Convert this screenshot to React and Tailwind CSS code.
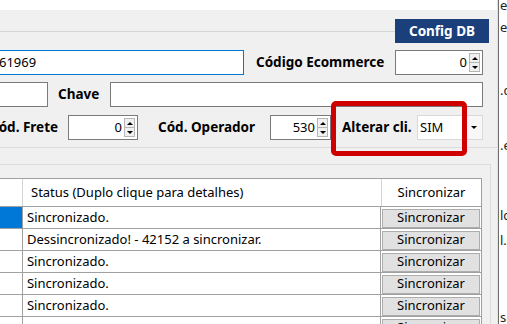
import React from 'react';

const ROWS = [
  { status: 'Sincronizado.', selected: true },
  { status: 'Dessincronizado! - 42152 a sincronizar.' },
  { status: 'Sincronizado.' },
  { status: 'Sincronizado.' },
  { status: 'Sincronizado.' },
  { status: '' },
];

const FRAGMENTS = [
  { top: -4, text: 'el' },
  { top: 18, text: 'e:' },
  { top: 81, text: '.c' },
  { top: 136, text: '.e' },
  { top: 206, text: 'lc' },
  { top: 231, text: 'l.c' },
  { top: 308, text: 's.' },
];

function Spinner({ value, width }) {
  return (
    <div className={`${width} h-[25px] bg-white border border-[#7a7a7a] flex items-stretch`}>
      <div className="flex-1 flex items-center justify-end pr-[2px] text-[13px]">{value}</div>
      <div className="w-[11px] flex flex-col my-[2px] mr-[2px]">
        <div className="flex-1 bg-[#f0f0f0] border border-[#b5b5b5] flex items-center justify-center">
          <div className="w-0 h-0 border-l-[3px] border-r-[3px] border-b-[3px] border-l-transparent border-r-transparent border-b-black" />
        </div>
        <div className="flex-1 bg-[#f0f0f0] border border-[#b5b5b5] border-t-0 flex items-center justify-center">
          <div className="w-0 h-0 border-l-[3px] border-r-[3px] border-t-[3px] border-l-transparent border-r-transparent border-t-black" />
        </div>
      </div>
    </div>
  );
}

export default function App() {
  return (
    <div
      className="w-[507px] h-[324px] overflow-hidden flex bg-white text-black"
      style={{ fontFamily: '"Noto Sans", "Open Sans", sans-serif' }}
    >
      {/* Main form */}
      <div className="w-[498px] shrink-0 bg-[#f0f0f0] flex flex-col overflow-hidden relative border-r border-[#e3e3e3]">
        <div className="h-[10px] bg-white shrink-0" />

        {/* Toolbar line + Config DB */}
        <div className="flex items-center h-[24px] mt-[9px] pr-[8px] shrink-0">
          <div className="flex-1 h-px bg-[#d5d5d5]" />
          <div className="w-[94px] h-[24px] bg-[#1a3f7a] text-white font-bold text-[13.5px] flex items-center justify-center">
            Config DB
          </div>
        </div>

        {/* Row 1 */}
        <div className="flex items-center h-[25px] mt-[7px] pr-[14px] shrink-0">
          <div className="-ml-[30px] w-[274px] h-[25px] bg-white border border-[#0078d7] flex items-center pl-[28px] text-[13px]">
            61969
          </div>
          <div className="ml-[12px] font-bold text-[13.5px] whitespace-nowrap">Código Ecommerce</div>
          <div className="ml-auto">
            <Spinner value="0" width="w-[88px]" />
          </div>
        </div>

        {/* Row 2 */}
        <div className="flex items-center h-[25px] mt-[7px] pr-[14px] shrink-0">
          <div className="-ml-[30px] w-[78px] h-[25px] bg-white border border-[#7a7a7a]" />
          <div className="ml-[10px] w-[52px] font-bold text-[13.5px]">Chave</div>
          <div className="flex-1 h-[25px] bg-white border border-[#7a7a7a]" />
        </div>

        {/* Row 3 */}
        <div className="flex items-center h-[25px] mt-[8px] pr-[14px] shrink-0">
          <div className="-ml-[10px] w-[78px] font-bold text-[13.5px] whitespace-nowrap">Cód. Frete</div>
          <Spinner value="0" width="w-[70px]" />
          <div className="ml-[20px] w-[112px] font-bold text-[13.5px] whitespace-nowrap">Cód. Operador</div>
          <Spinner value="530" width="w-[61px]" />
          <div className="ml-[11px] w-[75px] font-bold text-[13.5px] whitespace-nowrap">Alterar cli.</div>
          <div className="flex-1 h-[25px] bg-[#f7f7f7] border border-[#d9d9d9] flex items-stretch">
            <div className="flex-1 bg-white flex items-center pl-[2px] text-[13px]">SIM</div>
            <div className="w-[16px] flex items-center justify-center">
              <div className="w-0 h-0 border-l-[3px] border-r-[3px] border-t-[3px] border-l-transparent border-r-transparent border-t-black" />
            </div>
          </div>
        </div>

        {/* Highlight box */}
        <div className="absolute left-[331px] top-[101px] w-[136px] h-[55px] border-[5px] border-[#d10000] rounded-[5px]" />

        <div className="h-px bg-[#dcdcdc] mt-[7px] shrink-0" />

        {/* Lower panel */}
        <div className="mt-[16px] mr-[6px] border-t border-r border-[#dcdcdc] flex-1 flex flex-col">
          <div className="mt-[13px] mr-[8px] border-t border-r border-[#a0a0a0] bg-white text-[13px]">
            <div className="flex h-[28px] border-b border-[#a0a0a0]">
              <div className="w-[23px] border-r border-[#d5d5d5]" />
              <div className="w-[359px] border-r border-[#d5d5d5] flex items-center pl-[8px] whitespace-nowrap">
                Status (Duplo clique para detalhes)
              </div>
              <div className="flex-1 flex items-center justify-center">Sincronizar</div>
            </div>
            {ROWS.map((row, i) => (
              <div key={i} className="flex h-[22px] border-b border-[#a0a0a0]">
                <div className="w-[23px] border-r border-[#a0a0a0]">
                  {row.selected && <div className="h-full w-[22px] bg-[#0078d7]" />}
                </div>
                <div className="w-[359px] border-r border-[#a0a0a0] flex items-center pl-[4px] whitespace-nowrap">
                  {row.status}
                </div>
                <div className="flex-1 flex items-center px-[1px] pt-[1px]">
                  <div className="w-[98px] h-[19px] bg-[#e1e1e1] border border-[#adadad] flex items-center justify-center text-[13px]">
                    Sincronizar
                  </div>
                </div>
              </div>
            ))}
          </div>
        </div>
      </div>

      {/* Window edge */}
      <div className="w-px shrink-0 bg-[#6d6d6d]" />

      {/* Window behind */}
      <div className="flex-1 relative bg-white text-[13px] text-[#222]">
        {FRAGMENTS.map((f) => (
          <div key={f.top} className="absolute left-[1px] whitespace-nowrap" style={{ top: f.top }}>
            {f.text}
          </div>
        ))}
      </div>
    </div>
  );
}
